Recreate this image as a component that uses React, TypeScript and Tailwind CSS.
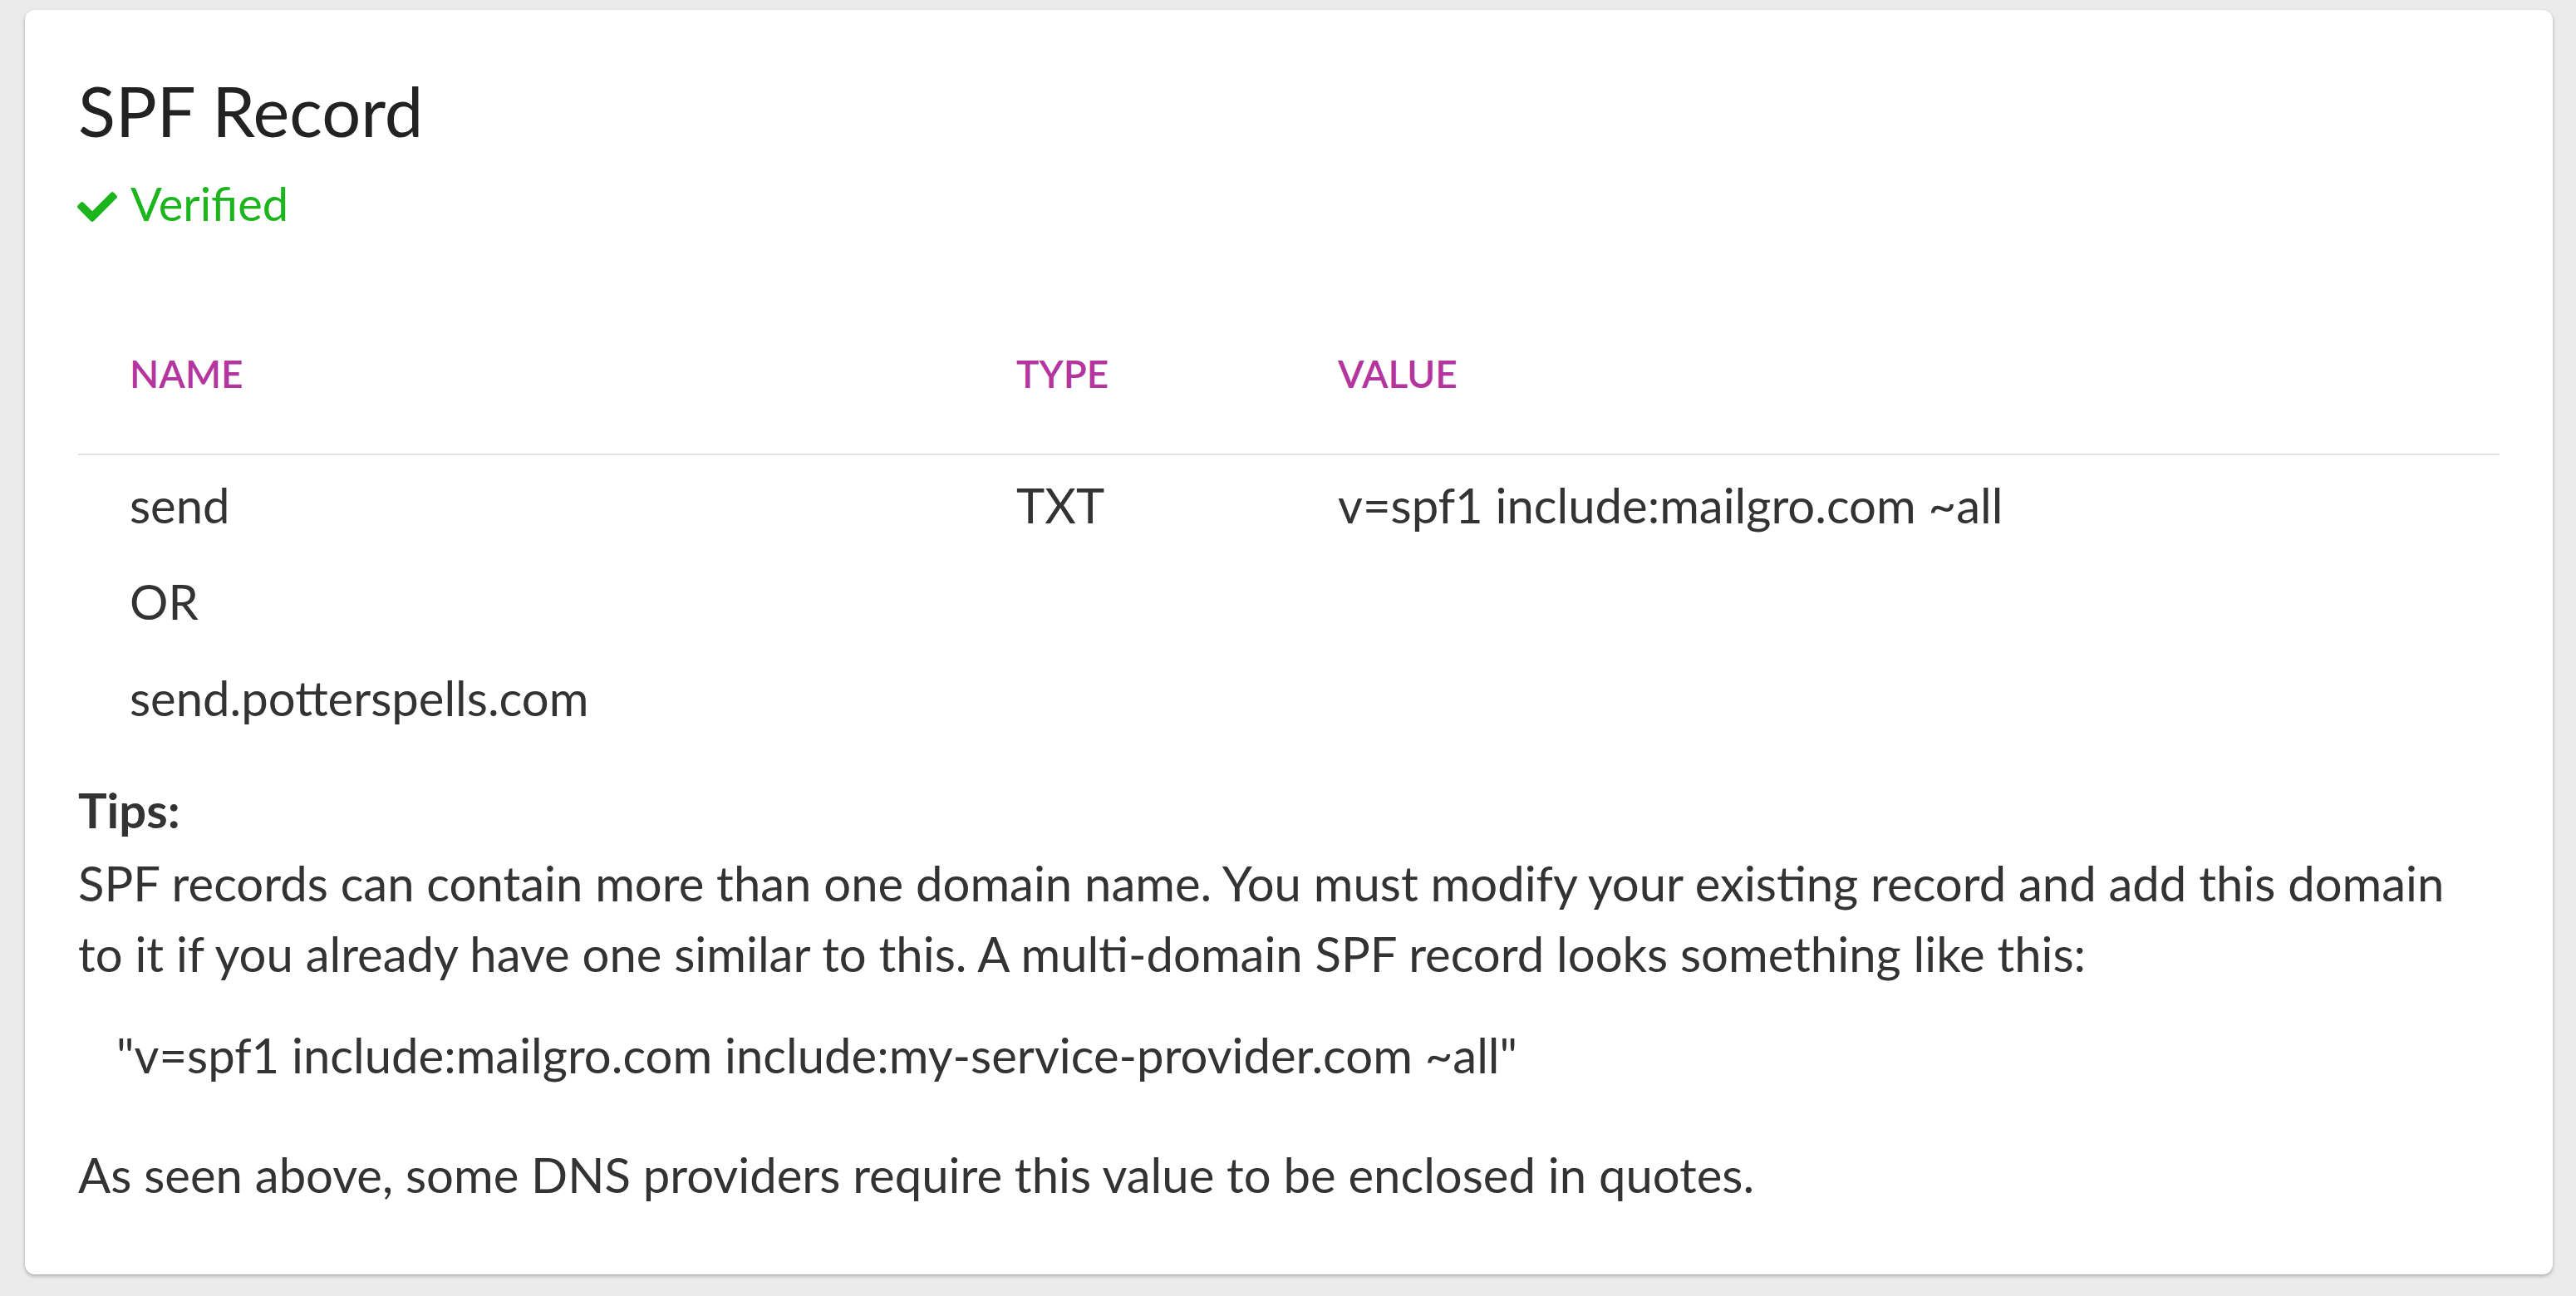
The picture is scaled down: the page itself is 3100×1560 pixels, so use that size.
import React from "react";
import { FaCheck } from "react-icons/fa";

const record = {
  names: ["send", "OR", "send.potterspells.com"],
  type: "TXT",
  value: "v=spf1 include:mailgro.com ~all",
};

export default function App() {
  return (
    <div
      className="min-h-screen bg-[#ebebeb] pt-[12px] pl-[30px] pr-[28px] pb-[29px]"
      style={{ fontFamily: "Lato, 'Open Sans', sans-serif" }}
    >
      <div className="bg-white rounded-[12px] shadow-[0_2px_4px_rgba(0,0,0,0.28)] px-[64px] pt-[80px] pb-[78px]">
        {/* Header */}
        <h1 className="text-[83px] leading-none text-[#222222]">SPF Record</h1>
        <div className="flex items-center mt-[41px] text-[#1db51d]">
          <FaCheck size={48} className="mt-[9px] -ml-[1px]" />
          <span className="ml-[16px] text-[56px] leading-none">Verified</span>
        </div>

        {/* Record table */}
        <div className="mt-[154px] grid grid-cols-[1067px_387px_1fr] text-[#b5359f] text-[46px] leading-none font-semibold">
          <div className="pl-[62px]">NAME</div>
          <div className="pl-[62px]">TYPE</div>
          <div className="pl-[62px]">VALUE</div>
        </div>
        <div className="mt-[73px] h-[2px] bg-[#e2e2e2]" />
        <div className="mt-[2px] grid grid-cols-[1067px_387px_1fr] text-[58px] leading-[116px] text-[#333333]">
          <div className="pl-[62px]">
            {record.names.map((n) => (
              <div key={n}>{n}</div>
            ))}
          </div>
          <div className="pl-[62px]">{record.type}</div>
          <div className="pl-[62px]">{record.value}</div>
        </div>

        {/* Tips */}
        <div className="mt-[34px] text-[58px] leading-[85px] text-[#333333]">
          <p className="font-bold">Tips:</p>
          <p className="mt-[3px] max-w-[2880px]">
            SPF records can contain more than one domain name. You must modify your existing record and add this
            domain to it if you already have one similar to this. A multi-domain SPF record looks something like this:
          </p>
          <p className="mt-[37px] pl-[46px]">
            "v=spf1 include:mailgro.com include:my-service-provider.com ~all"
          </p>
          <p className="mt-[59px]">As seen above, some DNS providers require this value to be enclosed in quotes.</p>
        </div>
      </div>
    </div>
  );
}
